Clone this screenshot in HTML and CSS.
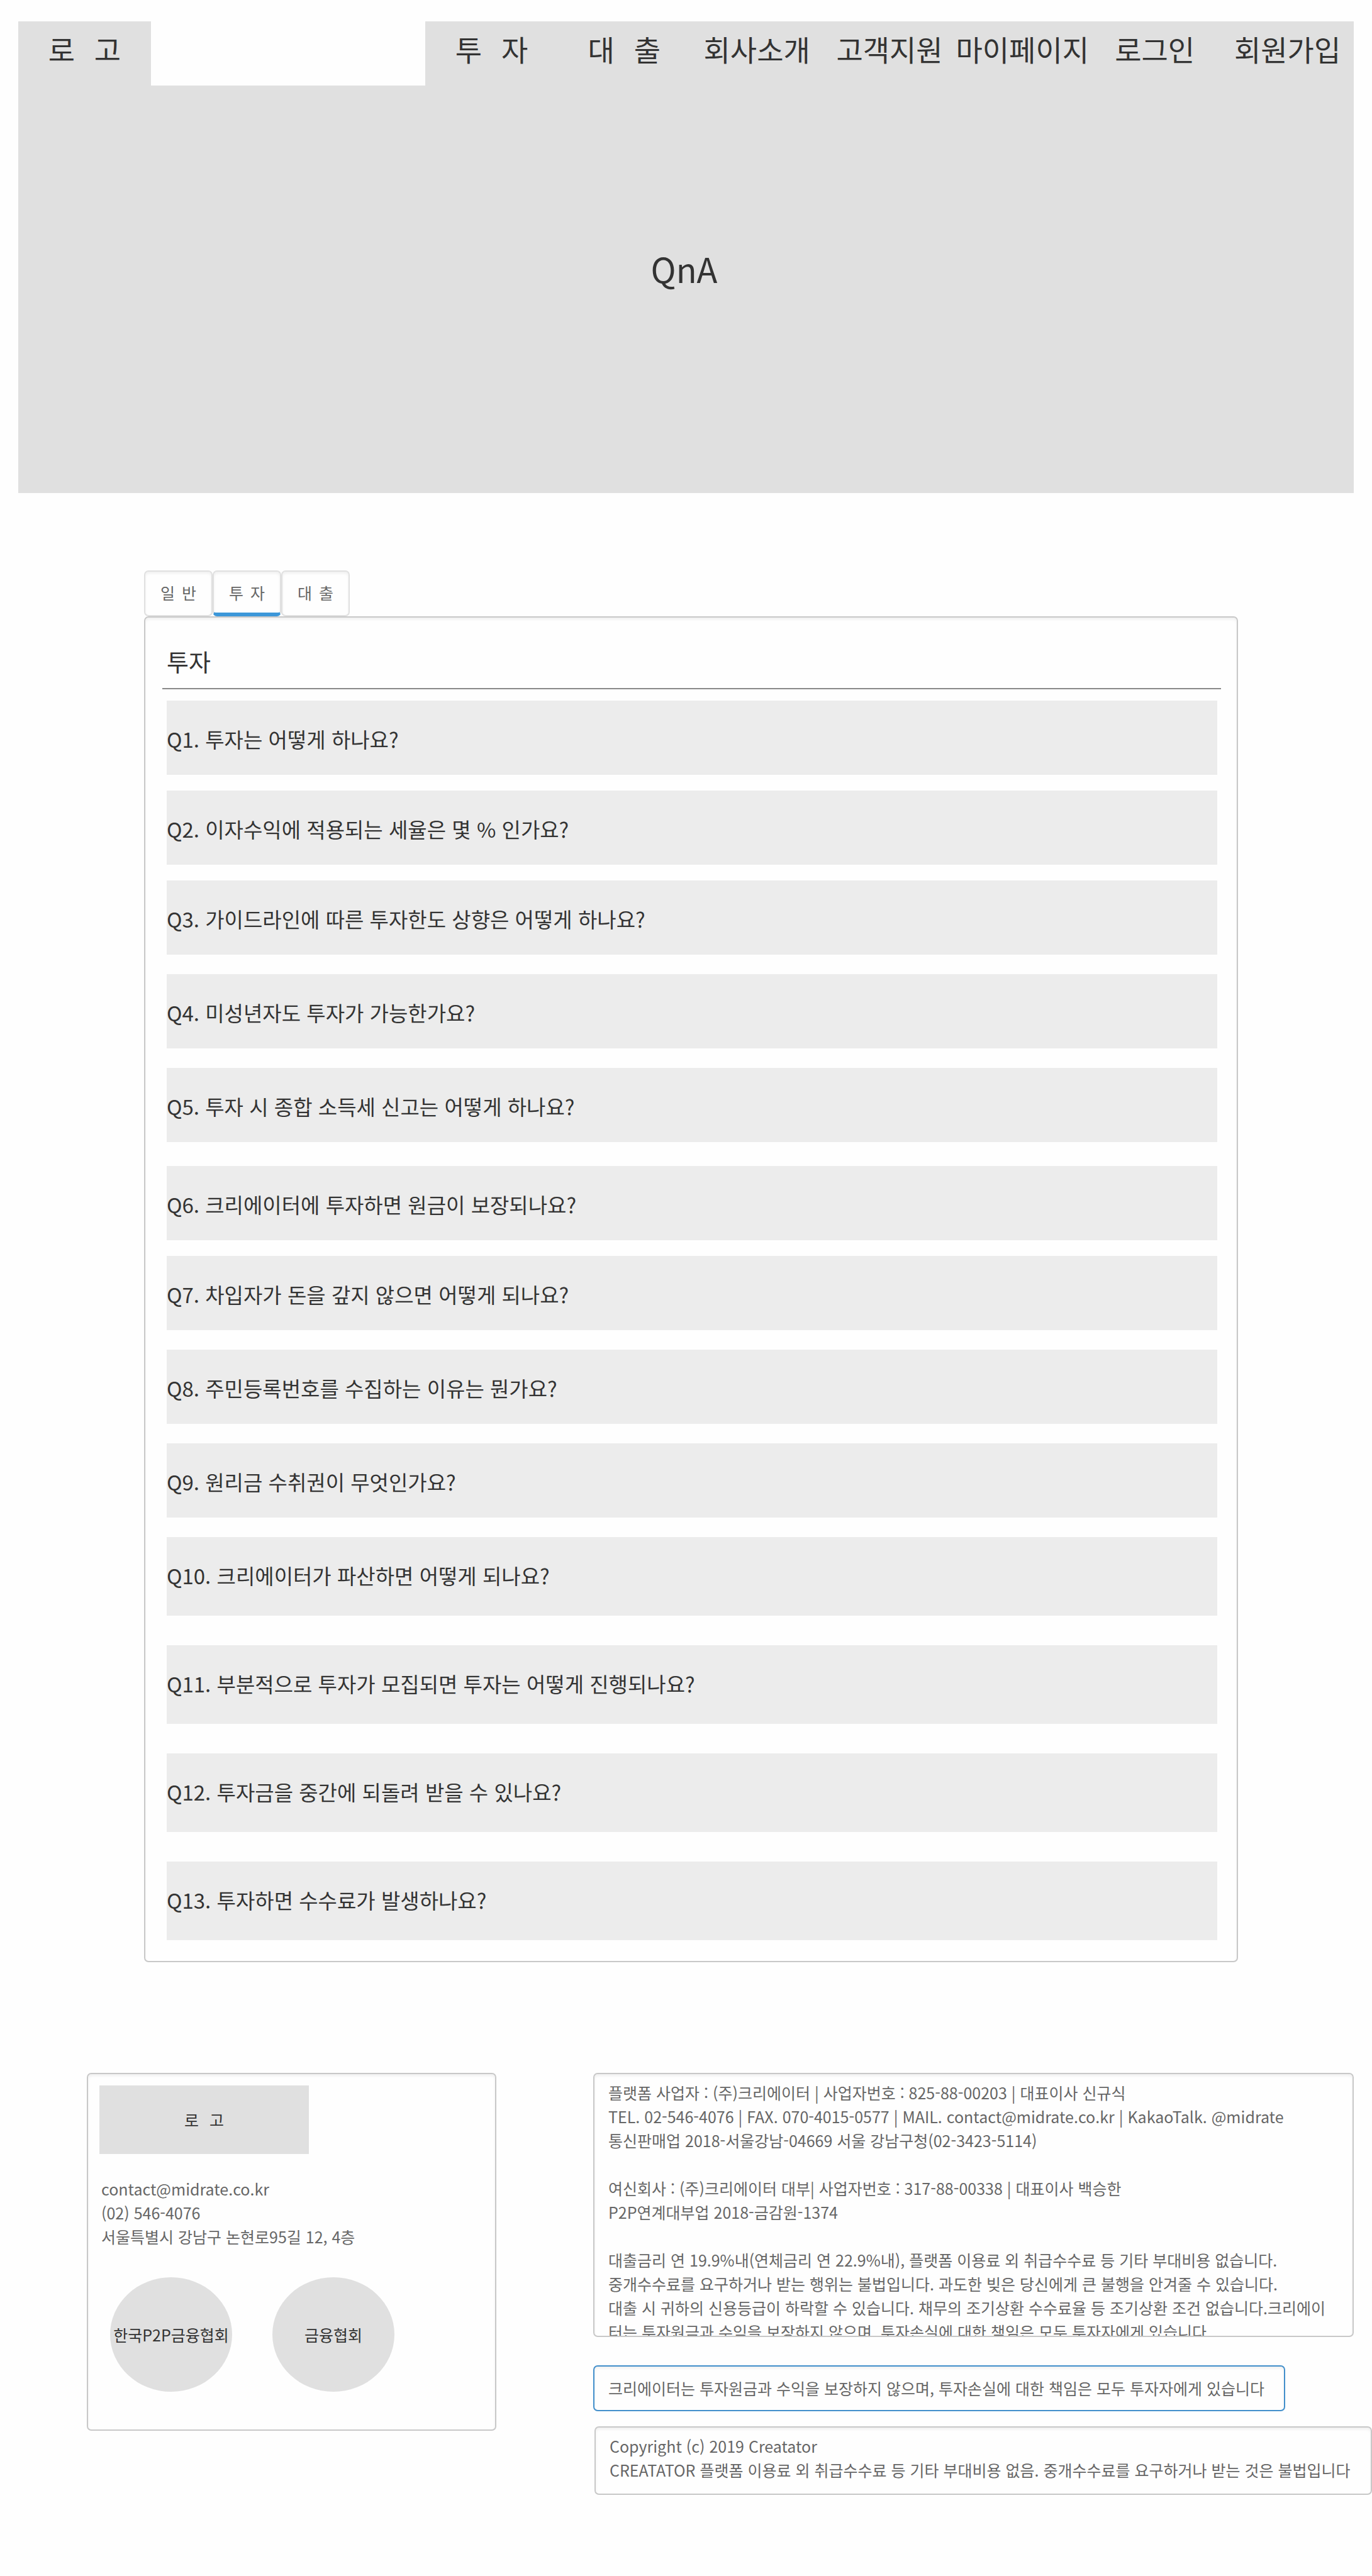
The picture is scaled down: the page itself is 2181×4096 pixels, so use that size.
FILE: index.html
```html
<!DOCTYPE html>
<html lang="ko">
<head>
<meta charset="utf-8">
<meta name="viewport" content="width=device-width, initial-scale=1">
<title>QnA</title>
<link rel="stylesheet" href="styles.css">
</head>
<body>
<header class="site-header">
  <div class="topbar">
    <a class="brand spaced" href="#">로   고</a>
    <nav class="main-nav">
      <a class="spaced" href="#">투   자</a>
      <a class="spaced" href="#">대   출</a>
      <a href="#">회사소개</a>
      <a href="#">고객지원</a>
      <a href="#">마이페이지</a>
      <a href="#">로그인</a>
      <a href="#">회원가입</a>
    </nav>
  </div>
  <div class="banner">
    <h1>QnA</h1>
  </div>
</header>

<main class="faq">
  <div class="tabs" role="tablist">
    <button class="tab spaced" type="button" role="tab" aria-selected="false">일  반</button>
    <button class="tab tab-active spaced" type="button" role="tab" aria-selected="true">투  자</button>
    <button class="tab spaced" type="button" role="tab" aria-selected="false">대  출</button>
  </div>
  <section class="panel box">
    <h2>투자</h2>
    <ul class="questions">
      <li>Q1. 투자는 어떻게 하나요?</li>
      <li class="near">Q2. 이자수익에 적용되는 세율은 몇 % 인가요?</li>
      <li class="near">Q3. 가이드라인에 따른 투자한도 상향은 어떻게 하나요?</li>
      <li>Q4. 미성년자도 투자가 가능한가요?</li>
      <li>Q5. 투자 시 종합 소득세 신고는 어떻게 하나요?</li>
      <li class="apart">Q6. 크리에이터에 투자하면 원금이 보장되나요?</li>
      <li class="near">Q7. 차입자가 돈을 갚지 않으면 어떻게 되나요?</li>
      <li>Q8. 주민등록번호를 수집하는 이유는 뭔가요?</li>
      <li>Q9. 원리금 수취권이 무엇인가요?</li>
      <li class="tall">Q10. 크리에이터가 파산하면 어떻게 되나요?</li>
      <li class="tall far">Q11. 부분적으로 투자가 모집되면 투자는 어떻게 진행되나요?</li>
      <li class="tall far">Q12. 투자금을 중간에 되돌려 받을 수 있나요?</li>
      <li class="tall far">Q13. 투자하면 수수료가 발생하나요?</li>
    </ul>
  </section>
</main>

<footer class="site-footer">
  <section class="contact box">
    <div class="footer-logo spaced">로   고</div>
    <address>contact@midrate.co.kr<br>(02) 546-4076<br>서울특별시 강남구 논현로95길 12, 4층</address>
    <div class="partners">
      <div class="partner">한국P2P금융협회</div>
      <div class="partner">금융협회</div>
    </div>
  </section>
  <div class="legal">
    <section class="company box">플랫폼 사업자 : (주)크리에이터 | 사업자번호 : 825-88-00203 | 대표이사 신규식<br>TEL. 02-546-4076 | FAX. 070-4015-0577 | MAIL. contact@midrate.co.kr | KakaoTalk. @midrate<br>통신판매업 2018-서울강남-04669 서울 강남구청(02-3423-5114)<br><br>여신회사 : (주)크리에이터 대부| 사업자번호 : 317-88-00338 | 대표이사 백승한<br>P2P연계대부업 2018-금감원-1374<br><br>대출금리 연 19.9%내(연체금리 연 22.9%내), 플랫폼 이용료 외 취급수수료 등 기타 부대비용 없습니다.<br>중개수수료를 요구하거나 받는 행위는 불법입니다. 과도한 빚은 당신에게 큰 불행을 안겨줄 수 있습니다.<br>대출 시 귀하의 신용등급이 하락할 수 있습니다. 채무의 조기상환 수수료율 등 조기상환 조건 없습니다.크리에이터는 투자원금과 수익을 보장하지 않으며, 투자손실에 대한 책임은 모두 투자자에게 있습니다</section>
    <p class="notice box">크리에이터는 투자원금과 수익을 보장하지 않으며, 투자손실에 대한 책임은 모두 투자자에게 있습니다</p>
    <p class="copyright box">Copyright (c) 2019 Creatator<br>CREATATOR 플랫폼 이용료 외 취급수수료 등 기타 부대비용 없음. 중개수수료를 요구하거나 받는 것은 불법입니다</p>
  </div>
</footer>
</body>
</html>
```
FILE: styles.css
```css
* {
  box-sizing: border-box;
}

body {
  margin: 0;
  background: #fefefe;
  color: #333;
  font-family: "Noto Sans CJK KR", sans-serif;
  font-size: 25px;
  line-height: 38px;
}

h1, h2, p, ul {
  margin: 0;
  padding: 0;
  font-weight: 400;
}

a {
  color: inherit;
  text-decoration: none;
}

.box {
  border: 2px solid #c8c8c8;
  border-radius: 7px;
  box-shadow: inset 0 3px 4px rgba(0, 0, 0, 0.06);
}

/* Header */

.site-header {
  padding: 34px 29px 0;
}

.topbar {
  display: grid;
  grid-template-columns: 29fr 203fr;
  column-gap: 20.547%;
  font-size: 46px;
  line-height: 66px;
  text-align: center;
}

.brand,
.main-nav {
  padding: 10px 0 26px;
  background: #e0e0e0;
}

.main-nav {
  display: grid;
  grid-template-columns: repeat(7, minmax(0, 1fr));
  white-space: nowrap;
}

.banner {
  min-height: 648px;
  padding: 251px 6px 0 0;
  background: #e0e0e0;
  text-align: center;
}

.banner h1 {
  font-size: 54px;
  line-height: 80px;
}

/* Question list */

.faq {
  padding: 123px 213px 0 229px;
}

.tabs {
  display: flex;
}

.tab {
  width: 109px;
  height: 73px;
  padding: 0 0 3px;
  border: 2px solid #e0e0e0;
  border-radius: 7px;
  background: none;
  box-shadow: inset 0 3px 4px rgba(0, 0, 0, 0.06);
  color: #666;
  font: inherit;
}

.tab-active {
  padding: 1px 0 0;
  border-bottom: 6px solid #3c97d9;
}

/* Labels whose syllables are set apart by runs of narrow spaces */
.spaced {
  font-family: "Noto Sans CJK JP", "Noto Sans CJK KR", sans-serif;
  font-feature-settings: "locl" 0;
  white-space: pre;
}

.panel {
  padding: 41px 25px 33px 27px;
}

.panel h2 {
  padding: 0 7px 15px;
  border-bottom: 2px solid #888;
  font-size: 38px;
  line-height: 56px;
}

.questions {
  padding: 18px 6px 0 7px;
  font-size: 33px;
  line-height: 50px;
  list-style: none;
}

.questions li {
  margin-top: 31px;
  padding: 36px 0 32px;
  background: #ececec;
}

.questions li:first-child {
  margin-top: 0;
}

.questions .near {
  margin-top: 25px;
}

.questions .apart {
  margin-top: 38px;
}

.questions .far {
  margin-top: 47px;
}

.questions .tall {
  padding-bottom: 39px;
}

/* Footer */

.site-footer {
  display: grid;
  grid-template-columns: minmax(0, 651fr) minmax(0, 1238fr);
  column-gap: 154px;
  align-items: start;
  padding: 176px 0 128px 138px;
  color: #666;
}

.contact {
  padding: 18px 18px 60px;
}

.footer-logo {
  width: 333px;
  padding: 35px 0 36px;
  background: #e0e0e0;
  color: #333;
  text-align: center;
}

address {
  padding: 36px 3px 0;
  font-style: normal;
}

.partners {
  display: flex;
  gap: 64px;
  padding: 46px 17px 0;
}

.partner {
  display: grid;
  place-items: center;
  width: 194px;
  height: 182px;
  border-radius: 50%;
  background: #e0e0e0;
  color: #333;
  white-space: nowrap;
}

.company {
  height: 420px;
  margin-right: 29px;
  padding: 10px 38px 0 22px;
  overflow: hidden;
}

.notice {
  margin: 45px 138px 0 0;
  padding: 15px 22px 16px;
  border-color: #428fcb;
}

.copyright {
  margin: 24px 0 0 2px;
  padding: 10px 22px 19px;
}
```
